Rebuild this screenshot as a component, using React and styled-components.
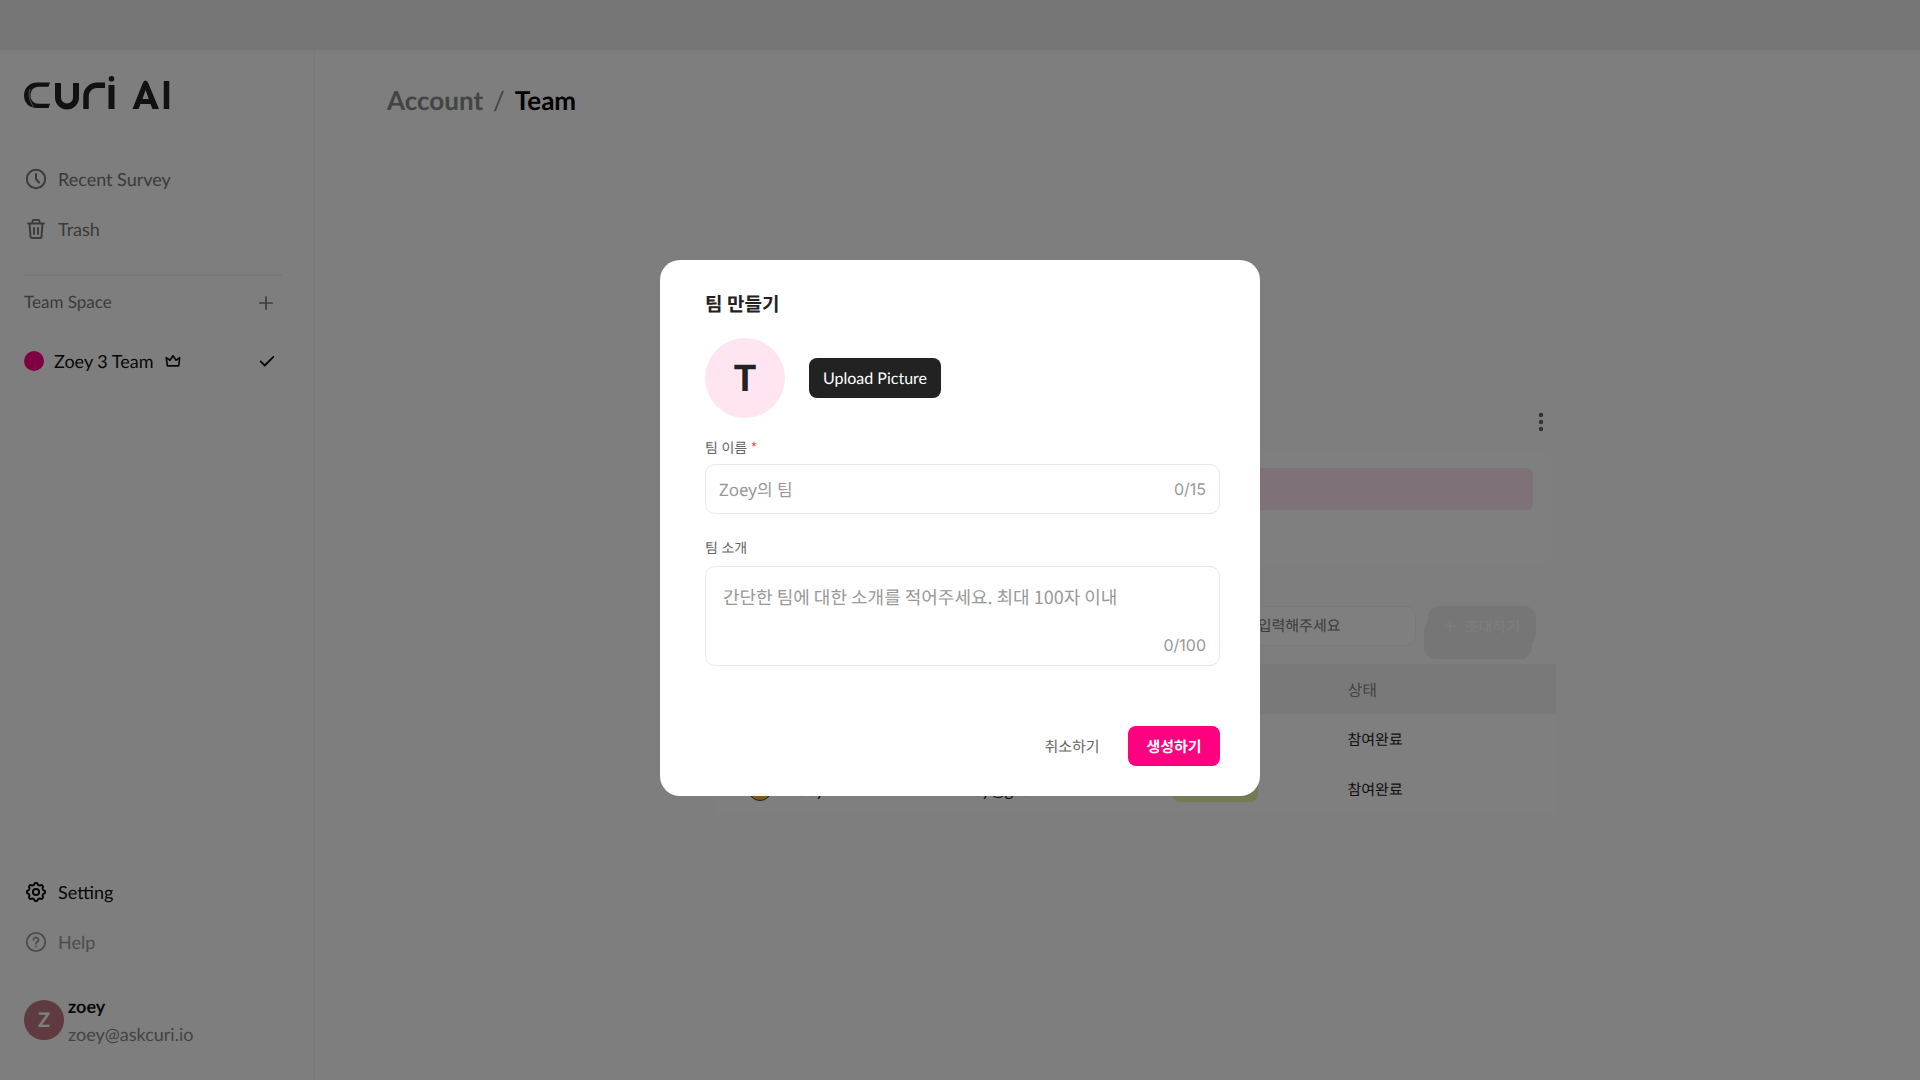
import React, { useState } from "react";
import styled, { createGlobalStyle } from "styled-components";

const GlobalStyle = createGlobalStyle`
  * {
    box-sizing: border-box;
  }

  body {
    margin: 0;
    background: #fcfcfc;
    color: #222;
    font-family: Lato, "Noto Sans CJK KR", sans-serif;
    text-rendering: geometricPrecision;
  }

  button,
  input,
  textarea {
    font-family: inherit;
    text-rendering: inherit;
  }
`;

const Page = styled.div`
  display: flex;
  flex-direction: column;
  min-height: 100vh;
`;

const TopBar = styled.div`
  height: 50px;
  background: #ededed;
`;

const Body = styled.div`
  display: flex;
  flex: 1;
`;

/* sidebar */

const Sidebar = styled.aside`
  display: flex;
  flex-direction: column;
  width: 315px;
  padding: 26px 31px 32px 24px;
  border-right: 2px solid #f6f6f6;
`;

const LogoLink = styled.a`
  display: block;
  height: 36px;
  margin-bottom: 42px;
`;

const NavLink = styled.a`
  display: flex;
  align-items: center;
  gap: 10px;
  height: 50px;
  color: ${({ $color }) => $color || "#777"};
  font-size: 18px;
  text-decoration: none;

  svg {
    width: 24px;
    height: 24px;
  }
`;

const Divider = styled.hr`
  width: 100%;
  height: 2px;
  margin: 20px 0 17px;
  border: 0;
  background: #f2f2f2;
`;

const SpaceHeader = styled.div`
  display: flex;
  align-items: flex-start;
  justify-content: space-between;
  height: 22px;
  margin-bottom: 34px;
  padding-right: 6px;
  color: #777;
  font-size: 17px;
  line-height: 18px;
`;

const IconButton = styled.button`
  display: flex;
  padding: 0;
  border: 0;
  background: none;
  color: inherit;
  cursor: pointer;
`;

const TeamLink = styled.a`
  display: flex;
  align-items: center;
  gap: 10px;
  height: 24px;
  padding-right: 6px;
  color: #111;
  font-size: 18px;
  text-decoration: none;
`;

const TeamDot = styled.span`
  width: 20px;
  height: 20px;
  border-radius: 50%;
  background: #ff0080;
`;

const PushRight = styled.span`
  display: flex;
  margin-left: auto;
`;

const SidebarBottom = styled.nav`
  margin-top: auto;
`;

const Profile = styled.div`
  display: flex;
  align-items: center;
  gap: 4px;
  margin-top: 25px;
`;

const ProfileAvatar = styled.div`
  display: flex;
  align-items: center;
  justify-content: center;
  width: 40px;
  height: 40px;
  border-radius: 50%;
  background: #bf7480;
  color: #fff;
  font-size: 20px;
  font-weight: 700;
`;

const ProfileText = styled.div`
  color: ${({ $muted }) => ($muted ? "#888" : "#111")};
  font-size: 18px;
  font-weight: ${({ $muted }) => ($muted ? 400 : 700)};
  line-height: 28px;
`;

/* main area */

const Main = styled.main`
  flex: 1;
  padding: 32px 36px 0 72px;
`;

const Breadcrumb = styled.h1`
  display: flex;
  gap: 10px;
  margin: 0;
  color: #888;
  font-size: 26px;
  font-weight: 400;
  line-height: 36px;

  a {
    color: inherit;
    font-weight: 700;
    text-decoration: none;
  }

  strong {
    color: #000;
  }
`;

const Content = styled.section`
  max-width: 840px;
  margin: 294px auto 0;
`;

const MenuRow = styled.div`
  display: flex;
  justify-content: flex-end;
  padding-right: 10px;
  margin-bottom: 18px;
  color: #666;
`;

const PlanCard = styled.div`
  height: 116px;
  margin-right: 3px;
  padding: 18px 20px;
  border-radius: 16px;
  background: #fff;
`;

const PlanBar = styled.div`
  height: 42px;
  border-radius: 6px;
  background: #ffe3f0;
`;

const Toolbar = styled.div`
  display: flex;
  align-items: flex-start;
  justify-content: flex-end;
  gap: 12px;
  height: 58px;
  margin-top: 40px;
  padding-right: 20px;
`;

const SearchInput = styled.input`
  width: 300px;
  height: 40px;
  padding: 0 74px 0 12px;
  border: 1px solid #f2f2f2;
  border-radius: 10px;
  background: #fff;
  font-size: 15px;
  text-align: right;

  &::placeholder {
    color: #777;
    opacity: 1;
  }
`;

const InviteButton = styled.button`
  display: flex;
  align-items: center;
  justify-content: center;
  gap: 8px;
  width: 108px;
  height: 40px;
  padding: 0;
  border: 0;
  border-radius: 12px;
  background: #ededed;
  box-shadow: -4px 13px #ededed;
  color: #fcfcfc;
  font-size: 15px;
`;

const MemberTable = styled.table`
  width: 100%;
  table-layout: fixed;
  border-collapse: collapse;
  background: #fff;
  font-size: 15px;

  th,
  td {
    height: 50px;
    padding: 0;
    text-align: left;
  }

  th {
    background: #f3f3f3;
    color: #888;
    font-size: 16px;
    font-weight: 400;
  }

  th:first-child,
  td:first-child {
    width: 240px;
    padding-left: 32px;
  }

  th:nth-child(2) {
    width: 216px;
  }

  th:nth-child(3) {
    width: 176px;
  }
`;

const Member = styled.div`
  display: flex;
  align-items: center;
  gap: 18px;
`;

const Latin = styled.span`
  font-size: 17px;
`;

const MemberAvatar = styled.span`
  width: 24px;
  height: 24px;
  border: 1px solid #444;
  border-radius: 50%;
  background: #f0b04c;
`;

const RoleBadge = styled.span`
  display: block;
  width: 86px;
  height: 26px;
  border-radius: 8px;
  background: ${({ $color }) => $color};
`;

/* modal */

const Overlay = styled.div`
  position: fixed;
  inset: 0;
  display: flex;
  align-items: center;
  justify-content: center;
  padding-bottom: 24px;
  background: rgba(0, 0, 0, 0.5);
`;

const Modal = styled.form`
  width: 600px;
  padding: 31px 40px 30px 45px;
  border-radius: 20px;
  background: #fff;
`;

const ModalTitle = styled.h2`
  margin: 0 0 19px;
  color: #222;
  font-size: 19px;
  font-weight: 700;
  line-height: 28px;
`;

const PictureRow = styled.div`
  display: flex;
  align-items: center;
  gap: 24px;
  margin-bottom: 20px;
`;

const TeamAvatar = styled.div`
  display: flex;
  align-items: center;
  justify-content: center;
  width: 80px;
  height: 80px;
  border-radius: 50%;
  background: #ffe5f2;
  color: #222;
  font-family: Inter, sans-serif;
  font-size: 36px;
  font-weight: 700;
`;

const Button = styled.button`
  min-width: 92px;
  height: 40px;
  padding: 0 ${({ $pad }) => $pad || 18}px;
  border: 0;
  border-radius: 8px;
  background: ${({ $bg }) => $bg || "none"};
  color: ${({ $color }) => $color || "#fff"};
  font-size: ${({ $size }) => $size || 15}px;
  font-weight: ${({ $bold }) => ($bold ? 700 : 400)};
  cursor: pointer;
`;

const Label = styled.label`
  display: block;
  margin-bottom: ${({ $gap }) => $gap || 6}px;
  color: #666;
  font-size: 14px;
  line-height: 20px;

  span {
    color: #f44;
    font-family: "Noto Sans CJK KR", sans-serif;
  }
`;

const Field = styled.div`
  display: flex;
  flex-direction: ${({ $column }) => ($column ? "column" : "row")};
  align-items: ${({ $column }) => ($column ? "stretch" : "center")};
  height: ${({ $column }) => ($column ? 100 : 50)}px;
  margin-bottom: ${({ $column }) => ($column ? 60 : 24)}px;
  padding: ${({ $column }) => ($column ? "16px 13px 10px 17px" : "0 13px")};
  border: 1px solid #e8e8e8;
  border-radius: 10px;
`;

const TextInput = styled.input`
  flex: 1;
  min-width: 0;
  padding: 0;
  border: 0;
  outline: 0;
  background: none;
  font-family: "Noto Sans", "Noto Sans CJK KR", sans-serif;
  font-size: 17px;

  &::placeholder {
    color: #999;
    opacity: 1;
  }
`;

const TextArea = styled.textarea`
  flex: 1;
  padding: 0;
  border: 0;
  outline: 0;
  background: none;
  font-family: "Noto Sans CJK KR", sans-serif;
  font-size: 18px;
  line-height: 28px;
  resize: none;

  &::placeholder {
    color: #999;
    opacity: 1;
  }
`;

const Counter = styled.span`
  align-self: ${({ $end }) => ($end ? "flex-end" : "auto")};
  color: #999;
  font-family: Inter, sans-serif;
  font-size: 16px;
  line-height: 20px;
`;

const Actions = styled.div`
  display: flex;
  justify-content: flex-end;
  gap: 10px;
`;

const Logo = () => (
  <svg width="146" height="36" viewBox="0 0 146 36" fill="none" stroke="#222">
    <path
      d="M26 6.500H13.500C5 6.500 0 12.500 0 19.500C0 26.500 5 32 13 32H24.500L26 27.800H14.500C9.500 27.800 6.500 24 6.500 19.500C6.500 14.500 9.500 10.700 14.500 10.700H24.500Z"
      fill="#222"
      stroke="none"
    />
    <path d="M6 13Q3 21 9.500 31" stroke="#fcfcfc" strokeWidth="0.600" />
    <path d="M34 7V21.500a9 9 0 0 0 18 0V7" strokeWidth="6" />
    <path d="M62 33V20a11 11 0 0 1 11-10.800h8" strokeWidth="5.500" />
    <path d="M87.500 9V33" strokeWidth="6" />
    <circle cx="87.500" cy="2.800" r="2.800" fill="#222" stroke="none" />
    <path
      d="M108.500 33L119 6.500Q121.500 2.500 124 6.500L135 33H128.500L126.500 28H116.500L114.500 33ZM118.500 23H124.800L121.600 14Z"
      fill="#222"
      fillRule="evenodd"
      stroke="none"
    />
    <path d="M142.500 5V33" strokeWidth="5.500" />
  </svg>
);

const iconProps = {
  viewBox: "0 0 24 24",
  fill: "none",
  stroke: "currentColor",
  strokeWidth: 2,
  strokeLinecap: "round",
  strokeLinejoin: "round",
};

const ClockIcon = () => (
  <svg {...iconProps}>
    <circle cx="12" cy="12" r="9.200" />
    <path d="M12 7v5l3 3.500" />
  </svg>
);

const TrashIcon = () => (
  <svg {...iconProps}>
    <path d="M4 6.500h16M8.500 6.500V4a1 1 0 0 1 1-1h5a1 1 0 0 1 1 1v2.500M5.500 6.500l1 13.300a1.300 1.300 0 0 0 1.300 1.200h8.400a1.300 1.300 0 0 0 1.300-1.200l1-13.300M10 11v6M14 11v6" />
  </svg>
);

const PlusIcon = ({ size }) => (
  <svg {...iconProps} width={size} height={size}>
    <path d="M12 4.500v15M4.500 12h15" />
  </svg>
);

const CrownIcon = () => (
  <svg {...iconProps} width="18" height="18" strokeWidth={2.200}>
    <path d="M4.500 18.500L3 7.500l5 3.500 4-6 4 6 5-3.500-1.500 11z" />
  </svg>
);

const CheckIcon = () => (
  <svg {...iconProps} width="18" height="18" strokeWidth={2.400}>
    <path d="M3.500 12.500l5.500 5.500L20.500 6.500" />
  </svg>
);

// eight rounded teeth around the hub
const gearPoints = Array.from({ length: 96 }, (_, i) => {
  const angle = (i / 96) * Math.PI * 2;
  const r = 8.2 + 0.9 * Math.tanh(1.8 * Math.cos(8 * angle));
  return `${(12 + r * Math.sin(angle)).toFixed(2)},${(12 - r * Math.cos(angle)).toFixed(2)}`;
}).join(" ");

const GearIcon = () => (
  <svg {...iconProps}>
    <polygon points={gearPoints} />
    <circle cx="12" cy="12" r="3.100" />
  </svg>
);

const HelpIcon = () => (
  <svg {...iconProps} strokeWidth={1.8}>
    <circle cx="12" cy="12" r="9.200" />
    <path d="M9.500 9.800a2.500 2.400 0 1 1 3.900 2c-.9.600-1.400 1-1.400 1.900M12 16.500v.1" />
  </svg>
);

const DotsIcon = () => (
  <svg width="10" height="20" viewBox="0 0 10 20" fill="currentColor">
    <circle cx="5" cy="3" r="2.200" />
    <circle cx="5" cy="10" r="2.200" />
    <circle cx="5" cy="17" r="2.200" />
  </svg>
);

const members = [
  { id: 1, name: "zoey", email: "zoey@g.io", color: "#ffe3f0", status: "참여완료" },
  { id: 2, name: "zoey", email: "zoey@g.io", color: "#eaf5a8", status: "참여완료" },
];

const SideMenu = () => (
  <Sidebar>
    <LogoLink href="#" aria-label="curi AI">
      <Logo />
    </LogoLink>
    <nav>
      <NavLink href="#">
        <ClockIcon />
        Recent Survey
      </NavLink>
      <NavLink href="#">
        <TrashIcon />
        Trash
      </NavLink>
    </nav>
    <Divider />
    <SpaceHeader>
      Team Space
      <IconButton type="button" aria-label="Add team">
        <PlusIcon size={20} />
      </IconButton>
    </SpaceHeader>
    <TeamLink href="#">
      <TeamDot />
      Zoey 3 Team
      <CrownIcon />
      <PushRight>
        <CheckIcon />
      </PushRight>
    </TeamLink>
    <SidebarBottom>
      <NavLink href="#" $color="#111">
        <GearIcon />
        Setting
      </NavLink>
      <NavLink href="#" $color="#999">
        <HelpIcon />
        Help
      </NavLink>
      <Profile>
        <ProfileAvatar>Z</ProfileAvatar>
        <div>
          <ProfileText>zoey</ProfileText>
          <ProfileText $muted>zoey@askcuri.io</ProfileText>
        </div>
      </Profile>
    </SidebarBottom>
  </Sidebar>
);

const TeamPage = () => (
  <Main>
    <Breadcrumb>
      <a href="#">Account</a>
      <span>/</span>
      <strong>Team</strong>
    </Breadcrumb>
    <Content>
      <MenuRow>
        <IconButton type="button" aria-label="More">
          <DotsIcon />
        </IconButton>
      </MenuRow>
      <PlanCard>
        <PlanBar />
      </PlanCard>
      <Toolbar>
        <SearchInput aria-label="Search" placeholder="이메일을 입력해주세요" />
        <InviteButton type="button">
          <PlusIcon size={14} />
          초대하기
        </InviteButton>
      </Toolbar>
      <MemberTable>
        <thead>
          <tr>
            <th>이름</th>
            <th>이메일</th>
            <th>권한</th>
            <th>상태</th>
          </tr>
        </thead>
        <tbody>
          {members.map((member) => (
            <tr key={member.id}>
              <td>
                <Member>
                  <MemberAvatar />
                  <Latin>{member.name}</Latin>
                </Member>
              </td>
              <td>
                <Latin>{member.email}</Latin>
              </td>
              <td>
                <RoleBadge $color={member.color} />
              </td>
              <td>{member.status}</td>
            </tr>
          ))}
        </tbody>
      </MemberTable>
    </Content>
  </Main>
);

const CreateTeamModal = () => {
  const [name, setName] = useState("");
  const [intro, setIntro] = useState("");

  return (
    <Overlay>
      <Modal role="dialog" aria-labelledby="modal-title">
        <ModalTitle id="modal-title">팀 만들기</ModalTitle>
        <PictureRow>
          <TeamAvatar>T</TeamAvatar>
          <Button type="button" $bg="#222" $size={16} $pad={14}>
            Upload Picture
          </Button>
        </PictureRow>
        <Label htmlFor="team-name">
          팀 이름 <span>*</span>
        </Label>
        <Field>
          <TextInput
            id="team-name"
            maxLength={15}
            placeholder="Zoey의 팀"
            value={name}
            onChange={(e) => setName(e.target.value)}
          />
          <Counter>{name.length}/15</Counter>
        </Field>
        <Label htmlFor="team-intro" $gap={8}>
          팀 소개
        </Label>
        <Field $column>
          <TextArea
            id="team-intro"
            maxLength={100}
            placeholder="간단한 팀에 대한 소개를 적어주세요. 최대 100자 이내"
            value={intro}
            onChange={(e) => setIntro(e.target.value)}
          />
          <Counter $end>{intro.length}/100</Counter>
        </Field>
        <Actions>
          <Button type="button" $color="#666">
            취소하기
          </Button>
          <Button type="button" $bg="#ff0080" $bold>
            생성하기
          </Button>
        </Actions>
      </Modal>
    </Overlay>
  );
};

export default function App() {
  return (
    <>
      <GlobalStyle />
      <Page>
        <TopBar />
        <Body>
          <SideMenu />
          <TeamPage />
        </Body>
      </Page>
      <CreateTeamModal />
    </>
  );
}
